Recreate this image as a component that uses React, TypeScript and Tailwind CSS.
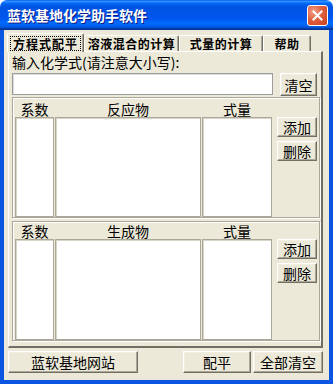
import type { ReactNode } from "react";

const FONT = "font-['Noto_Sans_CJK_SC',sans-serif]";

function Btn({ className, children }: { className: string; children: ReactNode }) {
  return (
    <button
      type="button"
      className={
        "flex shrink-0 items-center justify-center bg-[#ece9d8] text-[14px] leading-none text-black border border-t-white border-l-white border-r-[#716f64] border-b-[#716f64] shadow-[inset_-1px_-1px_#aca899,inset_1px_1px_#f1efe2] " +
        className
      }
    >
      {children}
    </button>
  );
}

function ListCol({ w }: { w: string }) {
  return <div className={"h-full bg-white border border-[#aca899] shadow-[inset_1px_1px_#d8d5c8] " + w} />;
}

function Section({
  title,
  headerH,
  headerPt,
  listH,
}: {
  title: string;
  headerH: string;
  headerPt: string;
  listH: string;
}) {
  return (
    <div className="flex w-[308px] border border-[#aca899] shadow-[inset_1px_1px_white,1px_1px_white] pl-[2px] pr-[2px]">
      <div className="flex flex-col">
        <div className={"flex gap-[1px] text-[14px] leading-[14px] text-black " + headerH + " " + headerPt}>
          <div className="w-[39px] text-center">系数</div>
          <div className="w-[146px] text-center">{title}</div>
          <div className="w-[70px] text-center">式量</div>
        </div>
        <div className={"flex gap-[1px] " + listH}>
          <ListCol w="w-[39px]" />
          <ListCol w="w-[146px]" />
          <ListCol w="w-[70px]" />
        </div>
      </div>
      <div className={"ml-[5px] flex flex-col gap-[4px] " + (headerH === "h-[19px]" ? "pt-[19px]" : "pt-[17px]")}>
        <Btn className="w-[40px] h-[20px]">添加</Btn>
        <Btn className="w-[40px] h-[20px]">删除</Btn>
      </div>
    </div>
  );
}

const TABS = [
  { label: "溶液混合的计算", w: "w-[95px]" },
  { label: "式量的计算", w: "w-[84px]" },
  { label: "帮助", w: "w-[48px]" },
];

export default function App() {
  return (
    <div className={"w-[333px] h-[384px] flex flex-col bg-white " + FONT}>
      {/* title bar */}
      <div className="h-[30px] shrink-0 flex items-center pl-[7px] pr-[5px] rounded-t-[7px] bg-[linear-gradient(180deg,#0058ee_0%,#3593ff_4%,#288eff_6%,#127dff_8%,#036ffc_10%,#0262ee_14%,#0057e5_20%,#0054e3_24%,#0055eb_56%,#005bf5_66%,#026afe_76%,#0062ef_86%,#0052d6_92%,#0040ab_94%,#003092_100%)]">
        <span className="text-white font-bold text-[14px] leading-none [text-shadow:1px_1px_#0a1883]">
          蓝软基地化学助手软件
        </span>
        <div className="ml-auto w-[21px] h-[21px] rounded-[3px] border border-white bg-[radial-gradient(circle_at_30%_30%,#f0a08a_0%,#e0603e_45%,#c8401c_100%)] flex items-center justify-center">
          <svg width="11" height="11" viewBox="0 0 11 11">
            <path d="M1.5 1.5 L9.5 9.5 M9.5 1.5 L1.5 9.5" stroke="white" strokeWidth="2" strokeLinecap="square" />
          </svg>
        </div>
      </div>

      {/* window body */}
      <div className="flex-1 flex flex-col bg-[#ece9d8] border-x-4 border-b-4 border-[#0b55e3]">
        {/* tabs */}
        <div className="relative z-10 mt-[3px] -mb-[1px] h-[19px] flex items-end pl-[3px]">
          <div className="h-[19px] w-[77px] flex items-start justify-center pt-[2px] bg-[#ece9d8] rounded-t-[2px] border-t border-l border-t-white border-l-white border-r border-r-[#716f64] shadow-[inset_-1px_0_#aca899]">
            <span className="border border-dotted border-black px-[2px] text-[12px] leading-[13px] tracking-[1px] font-bold text-black">
              方程式配平
            </span>
          </div>
          {TABS.map((t) => (
            <div
              key={t.label}
              className={
                "h-[16px] mb-[1px] flex items-center justify-center rounded-t-[2px] border-t border-l border-t-white border-l-white border-r border-r-[#716f64] shadow-[inset_-1px_0_#aca899] text-[12px] leading-none tracking-[0.5px] font-bold text-black " +
                t.w
              }
            >
              {t.label}
            </div>
          ))}
        </div>

        {/* tab panel */}
        <div className="ml-[4px] w-[315px] h-[297px] shrink-0 flex flex-col pl-[3px] pt-[3px] border-t border-l border-t-white border-l-white border-r-2 border-b-2 border-r-[#716f64] border-b-[#716f64]">
          <div className="h-[14px] text-[14px] leading-[14px] text-black">输入化学式(请注意大小写):</div>
          <div className="mt-[4px] flex items-start gap-[7px]">
            <div className="w-[261px] h-[22px] bg-white border border-[#9d9d9d] shadow-[inset_1px_1px_#dcdcdc]" />
            <Btn className="w-[37px] h-[23px]">清空</Btn>
          </div>
          <div className="mt-[1px]">
            <Section title="反应物" headerH="h-[19px]" headerPt="pt-[4px]" listH="h-[100px]" />
          </div>
          <div className="mt-[3px]">
            <Section title="生成物" headerH="h-[17px]" headerPt="pt-[2px]" listH="h-[101px]" />
          </div>
        </div>

        {/* bottom buttons */}
        <div className="mt-[3px] flex pl-[4px]">
          <Btn className="w-[130px] h-[22px]">蓝软基地网站</Btn>
          <Btn className="ml-[45px] w-[68px] h-[22px]">配平</Btn>
          <Btn className="ml-[2px] w-[70px] h-[22px]">全部清空</Btn>
        </div>
      </div>
    </div>
  );
}
